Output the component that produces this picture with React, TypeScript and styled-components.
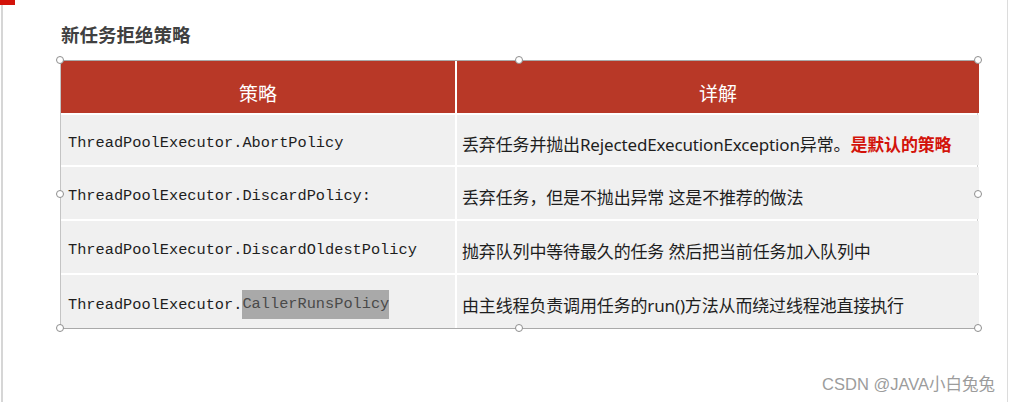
import React from "react";
import styled, { createGlobalStyle } from "styled-components";

const Global = createGlobalStyle`
  html, body { margin: 0; padding: 0; background: #ffffff; }
  body { width: 1010px; height: 402px; overflow: hidden; font-family: "Noto Sans", "Noto Sans CJK SC", sans-serif; }
`;

const Page = styled.div`
  position: relative;
  width: 1010px;
  height: 402px;
  display: flex;
`;

const LeftEdge = styled.div`
  width: 15px;
  display: flex;
  flex-direction: column;
`;

const RedMark = styled.div`
  width: 15px;
  height: 5px;
  background: #d3130a;
`;

const LeftLine = styled.div`
  flex: 1;
  width: 2px;
  margin-left: 1px;
  background: #d6d6d6;
`;

const Content = styled.div`
  flex: 1;
  padding-left: 45px;
  padding-top: 22px;
  display: flex;
  flex-direction: column;
`;

const RightLine = styled.div`
  width: 1px;
  margin-right: 2px;
  background: #dcdcdc;
`;

const Title = styled.h2`
  margin: 0 0 14px 1px;
  font-family: "Noto Sans CJK SC", sans-serif;
  font-size: 18.5px;
  line-height: 24px;
  font-weight: 700;
  color: #404040;
`;

const TableWrap = styled.div`
  position: relative;
  width: 918px;
`;

const Table = styled.div`
  display: grid;
  grid-template-columns: 394px 522px;
  grid-template-rows: 52px 50px 52px 52px 53px;
  column-gap: 2px;
  row-gap: 2px;
  background: #ffffff;
  border-top: 1px solid #a9a9a9;
  border-bottom: 1px solid #a9a9a9;
  border-left: 1px solid #c4c4c4;
  border-right: 1px solid #d0d0d0;
`;

const HeadCell = styled.div`
  background: #b83827;
  color: #ffffff;
  display: flex;
  align-items: center;
  justify-content: center;
  padding-top: 10px;
  font-family: "Noto Sans CJK SC", sans-serif;
  font-size: 19px;
`;

const Cell = styled.div<{ $mono?: boolean }>`
  background: #f0f0f0;
  display: flex;
  align-items: center;
  padding-left: ${(p) => (p.$mono ? "7px" : "5px")};
  padding-top: 6px;
  color: #1e1e1e;
  font-family: ${(p) =>
    p.$mono
      ? `"Liberation Mono", "DejaVu Sans Mono", monospace`
      : `"Noto Sans", "Noto Sans CJK SC", sans-serif`};
  font-size: ${(p) => (p.$mono ? "15.3px" : "17px")};
  letter-spacing: ${(p) => (p.$mono ? "0" : "-0.15px")};
  white-space: nowrap;
`;

const Strong = styled.span`
  color: #d3130a;
  font-weight: 700;
  font-family: "Noto Sans CJK SC", sans-serif;
  font-size: 17px;
`;

const Selected = styled.span`
  background: #a9a9a9;
  color: #4a4a4a;
  padding: 5px 0 6px;
`;

const Handle = styled.span<{ $x: number; $y: number }>`
  position: absolute;
  left: ${(p) => p.$x - 4}px;
  top: ${(p) => p.$y - 4}px;
  width: 6px;
  height: 6px;
  border-radius: 50%;
  border: 1px solid #8e8e8e;
  background: #ffffff;
`;

const Watermark = styled.div`
  position: absolute;
  right: 15px;
  bottom: 7px;
  font-family: "Liberation Sans", "Noto Sans CJK SC", sans-serif;
  font-size: 16.5px;
  line-height: 22px;
  color: #9c9c9c;
`;

const rows: { name: React.ReactNode; desc: React.ReactNode }[] = [
  {
    name: "ThreadPoolExecutor.AbortPolicy",
    desc: (
      <>
        丢弃任务并抛出RejectedExecutionException异常。<Strong>是默认的策略</Strong>
      </>
    ),
  },
  { name: "ThreadPoolExecutor.DiscardPolicy:", desc: "丢弃任务，但是不抛出异常 这是不推荐的做法" },
  { name: "ThreadPoolExecutor.DiscardOldestPolicy", desc: "抛弃队列中等待最久的任务 然后把当前任务加入队列中" },
  {
    name: (
      <>
        ThreadPoolExecutor.<Selected>CallerRunsPolicy</Selected>
      </>
    ),
    desc: "由主线程负责调用任务的run()方法从而绕过线程池直接执行",
  },
];

const handles = [
  [0, 0],
  [459, 0],
  [918, 0],
  [0, 134],
  [918, 134],
  [0, 268],
  [459, 268],
  [918, 268],
];

export default function App() {
  return (
    <Page>
      <Global />
      <LeftEdge>
        <RedMark />
        <LeftLine />
      </LeftEdge>
      <Content>
        <Title>新任务拒绝策略</Title>
        <TableWrap>
          <Table>
            <HeadCell>策略</HeadCell>
            <HeadCell>详解</HeadCell>
            {rows.map((r, i) => (
              <React.Fragment key={i}>
                <Cell $mono>{r.name}</Cell>
                <Cell>{r.desc}</Cell>
              </React.Fragment>
            ))}
          </Table>
          {handles.map(([x, y], i) => (
            <Handle key={i} $x={x} $y={y} />
          ))}
        </TableWrap>
      </Content>
      <RightLine />
      <Watermark>CSDN @JAVA小白兔兔</Watermark>
    </Page>
  );
}
